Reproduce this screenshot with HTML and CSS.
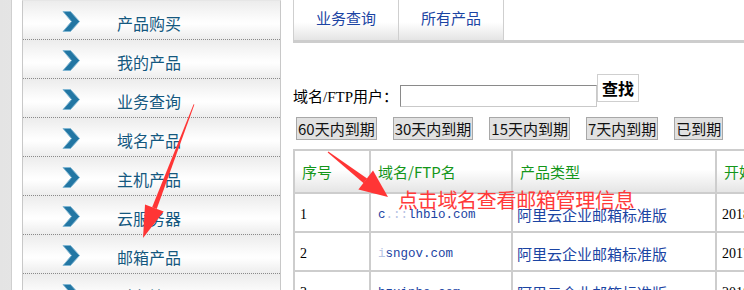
FILE: index.html
```html
<html>
<head>
    <meta charset="utf-8" />
    <title>业务查询</title>
    <link rel="stylesheet" href="styles.css">
</head>
<body>
    <div class="page">
        <div class="side">
            <div class="side-in">
                <ul class="menu">
                    <li><svg class="chev" viewBox="0 0 18 21"><path d="M1 0.5 L8.5 0.5 L17.5 10.5 L8.5 20.5 L1 20.5 L9.5 10.5 Z" /></svg><a href="#">产品购买</a></li>
                    <li><svg class="chev" viewBox="0 0 18 21"><path d="M1 0.5 L8.5 0.5 L17.5 10.5 L8.5 20.5 L1 20.5 L9.5 10.5 Z" /></svg><a href="#">我的产品</a></li>
                    <li><svg class="chev" viewBox="0 0 18 21"><path d="M1 0.5 L8.5 0.5 L17.5 10.5 L8.5 20.5 L1 20.5 L9.5 10.5 Z" /></svg><a href="#">业务查询</a></li>
                    <li><svg class="chev" viewBox="0 0 18 21"><path d="M1 0.5 L8.5 0.5 L17.5 10.5 L8.5 20.5 L1 20.5 L9.5 10.5 Z" /></svg><a href="#">域名产品</a></li>
                    <li><svg class="chev" viewBox="0 0 18 21"><path d="M1 0.5 L8.5 0.5 L17.5 10.5 L8.5 20.5 L1 20.5 L9.5 10.5 Z" /></svg><a href="#">主机产品</a></li>
                    <li><svg class="chev" viewBox="0 0 18 21"><path d="M1 0.5 L8.5 0.5 L17.5 10.5 L8.5 20.5 L1 20.5 L9.5 10.5 Z" /></svg><a href="#">云服务器</a></li>
                    <li><svg class="chev" viewBox="0 0 18 21"><path d="M1 0.5 L8.5 0.5 L17.5 10.5 L8.5 20.5 L1 20.5 L9.5 10.5 Z" /></svg><a href="#">邮箱产品</a></li>
                    <li><svg class="chev" viewBox="0 0 18 21"><path d="M1 0.5 L8.5 0.5 L17.5 10.5 L8.5 20.5 L1 20.5 L9.5 10.5 Z" /></svg><a href="#">财务管理</a></li>
                </ul>
            </div>
        </div>

        <div class="main">
            <div class="tabs">
                <a class="tab" href="#">业务查询</a>
                <a class="tab" href="#">所有产品</a>
            </div>

            <div class="search">
                <label class="search-label">域名/FTP用户：</label>
                <input class="search-input" type="text" />
                <button class="search-btn">查找</button>
            </div>

            <div class="filters">
                <button class="filter">60天内到期</button>
                <button class="filter">30天内到期</button>
                <button class="filter">15天内到期</button>
                <button class="filter">7天内到期</button>
                <button class="filter">已到期</button>
            </div>

            <table class="list">
                <colgroup>
                    <col class="c-no" />
                    <col class="c-name" />
                    <col class="c-type" />
                    <col class="c-date" />
                </colgroup>
                <tr>
                    <th>序号</th>
                    <th>域名/FTP名</th>
                    <th>产品类型</th>
                    <th>开始时间</th>
                </tr>
                <tr>
                    <td class="num">1</td>
                    <td><a class="domain" href="#">c<span class="blur">.::</span>lhbio.com</a></td>
                    <td><a class="ptype" href="#">阿里云企业邮箱标准版</a></td>
                    <td class="num">2018-03-12</td>
                </tr>
                <tr>
                    <td class="num">2</td>
                    <td><a class="domain" href="#"><span class="blur">i</span>sngov.com</a></td>
                    <td><a class="ptype" href="#">阿里云企业邮箱标准版</a></td>
                    <td class="num">2017-11-05</td>
                </tr>
                <tr>
                    <td class="num">3</td>
                    <td><a class="domain" href="#">hzxinhe.com</a></td>
                    <td><a class="ptype" href="#">阿里云企业邮箱标准版</a></td>
                    <td class="num">2018-01-20</td>
                </tr>
            </table>
        </div>

        <!-- annotation arrows drawn over the screenshot -->
        <svg class="marks" viewBox="0 0 744 290">
            <polygon points="193.6,104.2 194.4,104.5 156.7,209.1 152.1,207.3" />
            <polygon points="143,238 145,204.4 163.7,211.6" />
            <polygon points="327.7,152.4 328.3,151.6 367.1,178.6 363.7,183.2" />
            <polygon points="388,197 358.4,189.5 373,170.5" />
        </svg>
        <div class="note">点击域名查看邮箱管理信息</div>
    </div>
</body>
</html>
```

FILE: styles.css
```css
body {
    margin: 0;
    padding: 0;
    background: #fff;
    font-family: "Noto Sans CJK SC", sans-serif;
}
.page {
    position: relative;
    display: flex;
    width: 744px;
    height: 290px;
    overflow: hidden;
}

/* left menu */
.side {
    flex: none;
    padding-left: 11px;
    background: linear-gradient(to right, #e4e4e4, #f3f3f3);
}
.side-in {
    height: 100%;
    padding-left: 10px;
    border-left: 1px solid #cfcfcf;
    background: #fff;
}
.menu {
    width: 257px;
    margin: 0;
    padding: 0;
    list-style: none;
    border-top: 1px solid #e6e6e6;
    border-left: 1px solid #c8c8c8;
    border-right: 1px solid #c8c8c8;
}
.menu li {
    display: flex;
    align-items: center;
    box-sizing: border-box;
    height: 39px;
    padding: 6px 0 0 39px;
    border-bottom: 1px dotted #8a8a8a;
    background: linear-gradient(to bottom, #ececec, #fbfbfb 45%, #fff 60%, #ededed);
}
.chev {
    width: 18px;
    height: 21px;
    margin-top: -4px;
    fill: #2276a3;
    stroke: #7fb6d3;
    stroke-width: 1;
}
.menu a {
    margin-left: 37px;
    font-size: 16px;
    line-height: 26px;
    color: #14587f;
    text-decoration: none;
}

/* right content */
.main {
    flex: 1;
    min-width: 0;
    margin-left: 12px;
}
.tabs {
    display: flex;
    height: 40px;
    border-bottom: 3px solid #cdcdcd;
}
.tab {
    width: 104px;
    height: 40px;
    border-right: 1px solid #cfcfcf;
    background: linear-gradient(to bottom, #fff, #fff 55%, #e4e4e4);
    font-size: 15px;
    line-height: 35px;
    text-align: center;
    color: #1b44a3;
    text-decoration: none;
}
.tab:first-child {
    border-left: 1px solid #cfcfcf;
}
.search {
    display: flex;
    align-items: flex-start;
    margin-top: 31px;
}
.search-label {
    margin-top: 13px;
    font-family: "Liberation Serif", "Noto Sans CJK SC", serif;
    font-size: 15px;
    line-height: 20px;
    color: #000;
}
.search-input {
    box-sizing: border-box;
    width: 197px;
    height: 22px;
    margin: 11px 0 0 2px;
    padding: 0;
    border: 1px solid #c9c9c9;
    border-top-color: #8a8a8a;
    border-left-color: #8a8a8a;
}
.search-btn {
    box-sizing: border-box;
    width: 42px;
    height: 28px;
    padding: 0;
    border: 1px solid #cfcfcf;
    background: #fff;
    font-family: "Noto Sans CJK SC", sans-serif;
    font-size: 16px;
    font-weight: bold;
    color: #000;
}
.filters {
    display: flex;
    margin: 10px 0 0 3px;
}
.filter {
    box-sizing: border-box;
    height: 23px;
    margin-right: 16px;
    padding: 0 1px;
    border: 1px solid #a8a8a8;
    background: #e1e1e1;
    font-family: "Noto Sans CJK SC", sans-serif;
    font-size: 15px;
    line-height: 20px;
    color: #111;
}

/* result table */
.list {
    table-layout: fixed;
    width: 690px;
    margin-top: 9px;
    border-collapse: collapse;
    border: 2px solid #cdcdcd;
}
.c-no { width: 76px; }
.c-name { width: 142px; }
.c-type { width: 204px; }
.c-date { width: 268px; }
.list th,
.list td {
    padding: 0 0 0 7px;
    border: 2px solid #cdcdcd;
    text-align: left;
    white-space: nowrap;
    overflow: hidden;
}
.list th {
    height: 43px;
    background: linear-gradient(to bottom, #fff, #fff 45%, #e5e5e5);
    font-size: 15px;
    font-weight: normal;
    color: #14961a;
}
.list td {
    height: 39px;
    padding-top: 4px;
    font-size: 15px;
}
.list .num {
    padding-left: 5px;
    font-family: "Liberation Serif", serif;
    font-size: 14px;
    color: #000;
}
.domain {
    font-family: "Liberation Mono", monospace;
    font-size: 12.5px;
    color: #1b44a3;
    text-decoration: none;
}
.blur {
    color: #b7c4e4;
}
.ptype {
    margin-left: -3px;
    font-size: 15px;
    color: #1b44a3;
    text-decoration: none;
}

/* red annotation over the picture */
.marks {
    position: absolute;
    left: 0;
    top: 0;
    width: 744px;
    height: 290px;
    fill: #ff3535;
    pointer-events: none;
}
.note {
    position: absolute;
    left: 398px;
    top: 186px;
    font-size: 20px;
    line-height: 28px;
    color: #ff3a3a;
    letter-spacing: -0.3px;
}
```
